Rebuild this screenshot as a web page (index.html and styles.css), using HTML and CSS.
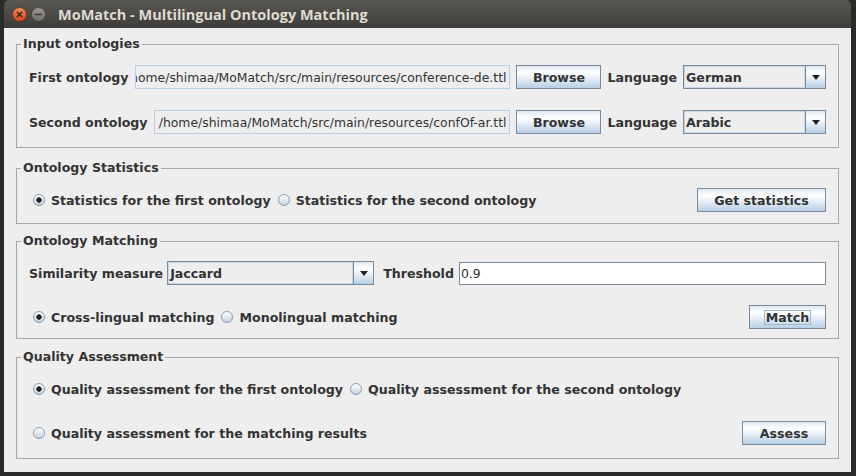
FILE: index.html
```html
<!DOCTYPE html>
<html>
<head>
<meta charset="utf-8">
<title>MoMatch</title>
<link rel="stylesheet" href="styles.css">
</head>
<body>
<div class="window">
  <div class="titlebar">
    <span class="wbtn">
      <svg width="15" height="15" viewBox="0 0 15 15">
        <defs>
          <linearGradient id="gc" x1="0" y1="0" x2="0" y2="1">
            <stop offset="0" stop-color="#f58a5c"/>
            <stop offset="1" stop-color="#d9431a"/>
          </linearGradient>
        </defs>
        <circle cx="7.5" cy="7.5" r="7" fill="url(#gc)" stroke="#3b2a22" stroke-width="0.6"/>
        <path d="M5.2 5.2 L9.8 9.8 M9.8 5.2 L5.2 9.8" stroke="#3a2219" stroke-width="1.5" stroke-linecap="round"/>
      </svg>
    </span>
    <span class="wbtn">
      <svg width="15" height="15" viewBox="0 0 15 15">
        <defs>
          <linearGradient id="gm" x1="0" y1="0" x2="0" y2="1">
            <stop offset="0" stop-color="#9a9891"/>
            <stop offset="1" stop-color="#6e6c66"/>
          </linearGradient>
        </defs>
        <circle cx="7.5" cy="7.5" r="7" fill="url(#gm)" stroke="#2f2e2b" stroke-width="0.6"/>
        <path d="M4.6 7.5 H10.4" stroke="#3a3935" stroke-width="1.5" stroke-linecap="round"/>
      </svg>
    </span>
    <span class="title">MoMatch - Multilingual Ontology Matching</span>
  </div>

  <div class="content">
    <fieldset class="panel p-input">
      <legend>Input ontologies</legend>
      <div class="row">
        <span class="lbl">First ontology</span>
        <div class="field ro"><span>/home/shimaa/MoMatch/src/main/resources/conference-de.ttl</span></div>
        <button class="btn w-browse">Browse</button>
        <span class="lbl">Language</span>
        <div class="combo w-lang"><span class="cval">German</span><span class="carrow"><i class="tri"></i></span></div>
      </div>
      <div class="row gap-row">
        <span class="lbl">Second ontology</span>
        <div class="field ro"><span>/home/shimaa/MoMatch/src/main/resources/confOf-ar.ttl</span></div>
        <button class="btn w-browse">Browse</button>
        <span class="lbl">Language</span>
        <div class="combo w-lang"><span class="cval">Arabic</span><span class="carrow"><i class="tri"></i></span></div>
      </div>
    </fieldset>

    <fieldset class="panel p-stats">
      <legend>Ontology Statistics</legend>
      <div class="row">
        <span class="radio"><i class="rb on"></i>Statistics for the first ontology</span>
        <span class="radio"><i class="rb"></i>Statistics for the second ontology</span>
        <span class="spacer"></span>
        <button class="btn w-stats">Get statistics</button>
      </div>
    </fieldset>

    <fieldset class="panel p-match">
      <legend>Ontology Matching</legend>
      <div class="row row-sim">
        <span class="lbl">Similarity measure</span>
        <div class="combo w-sim"><span class="cval">Jaccard</span><span class="carrow"><i class="tri"></i></span></div>
        <span class="lbl thr">Threshold</span>
        <div class="field edit"><span>0.9</span></div>
      </div>
      <div class="row gap-row2">
        <span class="radio"><i class="rb on"></i>Cross-lingual matching</span>
        <span class="radio"><i class="rb"></i>Monolingual matching</span>
        <span class="spacer"></span>
        <button class="btn w-match"><span class="focus">Match</span></button>
      </div>
    </fieldset>

    <fieldset class="panel p-quality">
      <legend>Quality Assessment</legend>
      <div class="row">
        <span class="radio"><i class="rb on"></i>Quality assessment for the first ontology</span>
        <span class="radio"><i class="rb"></i>Quality assessment for the second ontology</span>
      </div>
      <div class="row gap-row2">
        <span class="radio"><i class="rb"></i>Quality assessment for the matching results</span>
        <span class="spacer"></span>
        <button class="btn w-assess">Assess</button>
      </div>
    </fieldset>
  </div>
</div>
</body>
</html>
```

FILE: styles.css
```css
html, body {
  margin: 0;
  padding: 0;
}

body {
  width: 856px;
  height: 476px;
  overflow: hidden;
  background: #2a2a29;
  font-family: "DejaVu Sans", "Liberation Sans", sans-serif;
  font-size: 12.6px;
  color: #333333;
}

.window {
  margin-left: 4px;
  width: 847px;
}

.titlebar {
  height: 28px;
  background: linear-gradient(#57564f, #3e3d39);
  border-radius: 5px 5px 0 0;
  display: flex;
  align-items: center;
  padding-left: 8px;
  box-sizing: border-box;
}

.wbtn {
  display: flex;
  width: 15px;
  height: 15px;
  margin-right: 4px;
  margin-top: 1px;
}

.title {
  margin-left: 8px;
  font-family: "Open Sans", "DejaVu Sans", sans-serif;
  font-weight: bold;
  font-size: 14.5px;
  color: #dfdbd2;
  white-space: nowrap;
}

.content {
  background: #eeeeee;
  height: 444px;
  box-sizing: border-box;
  padding: 0 12px 0 12px;
  overflow: hidden;
}

.panel {
  margin: 0;
  border: 1px solid #a7a7a7;
  padding: 0 12px;
  min-width: 0;
}

.panel legend {
  font-weight: bold;
  font-size: 12.6px;
  line-height: 16px;
  height: 16px;
  padding: 0 2px;
  margin-left: -8px;
  color: #333333;
}

.p-input { margin-top: 8px; padding-top: 13px; padding-bottom: 13px; }
.p-stats { margin-top: 12px; padding-top: 12px; padding-bottom: 11px; }
.p-match { margin-top: 9px; padding-top: 12px; padding-bottom: 9px; }
.p-quality { margin-top: 10px; padding-top: 12px; padding-bottom: 13px; }

.row {
  display: flex;
  align-items: center;
  height: 24px;
  gap: 6px;
}

.row-sim { gap: 5px; }

.gap-row { margin-top: 21px; }
.gap-row2 { margin-top: 20px; }

.lbl {
  font-weight: bold;
  white-space: nowrap;
}

.row-sim .combo { margin-left: -1px; }

.thr { margin-left: 4px; }

.field {
  flex: 1;
  min-width: 0;
  height: 24px;
  box-sizing: border-box;
  display: flex;
  align-items: center;
  overflow: hidden;
  white-space: nowrap;
  font-size: 12.4px;
}

.field span { flex-shrink: 0; }

.field.ro {
  justify-content: flex-end;
  background: #eeeeee;
  border: 1px solid #b8cfe5;
  padding-right: 3px;
}

.field.edit {
  justify-content: flex-start;
  background: #ffffff;
  border: 1px solid #7a8a99;
  height: 23px;
  padding-left: 1px;
}

.btn {
  font-family: inherit;
  font-size: 12.6px;
  font-weight: bold;
  color: #333333;
  height: 24px;
  padding: 0;
  border: 1px solid #7a8a99;
  border-radius: 0;
  background: linear-gradient(#dde8f3 0%, #ffffff 28%, #f6f9fc 40%, #b8cfe5 100%);
  display: flex;
  align-items: center;
  justify-content: center;
  box-sizing: border-box;
  flex-shrink: 0;
}

.w-browse { width: 85px; }
.w-stats { width: 129px; }
.w-match { width: 77px; }
.w-assess { width: 84px; }

.focus {
  border: 1px solid #a3b8cc;
  padding: 0 1px;
  line-height: 13px;
}

.combo {
  display: flex;
  height: 24px;
  box-sizing: border-box;
  border: 1px solid #7a8a99;
  background: #eeeeee;
  flex-shrink: 0;
}

.w-lang { width: 143px; }
.w-sim { width: 207px; }

.cval {
  flex: 1;
  border: 1px solid #c6d6e6;
  font-weight: bold;
  display: flex;
  align-items: center;
  padding-left: 1px;
  white-space: nowrap;
}

.carrow {
  width: 19px;
  border-left: 1px solid #7a8a99;
  background: linear-gradient(#dde8f3 0%, #ffffff 28%, #f6f9fc 40%, #b8cfe5 100%);
  display: flex;
  align-items: center;
  justify-content: center;
}

.tri {
  width: 0;
  height: 0;
  border-left: 4px solid transparent;
  border-right: 4px solid transparent;
  border-top: 5px solid #222222;
  margin-top: 1px;
}

.radio {
  display: flex;
  align-items: center;
  gap: 6px;
  font-weight: bold;
  white-space: nowrap;
  margin-left: 4px;
}

.radio + .radio { margin-left: 1px; }

.rb {
  width: 12px;
  height: 12px;
  box-sizing: border-box;
  border-radius: 50%;
  border: 1px solid #8c9aa8;
  background: linear-gradient(#ffffff, #c3d4e6);
  flex-shrink: 0;
}

.rb.on {
  background: radial-gradient(circle at 50% 50%, #222222 0, #222222 2.4px, transparent 3px), linear-gradient(#ffffff, #c3d4e6);
}

.spacer { flex: 1; }
```
